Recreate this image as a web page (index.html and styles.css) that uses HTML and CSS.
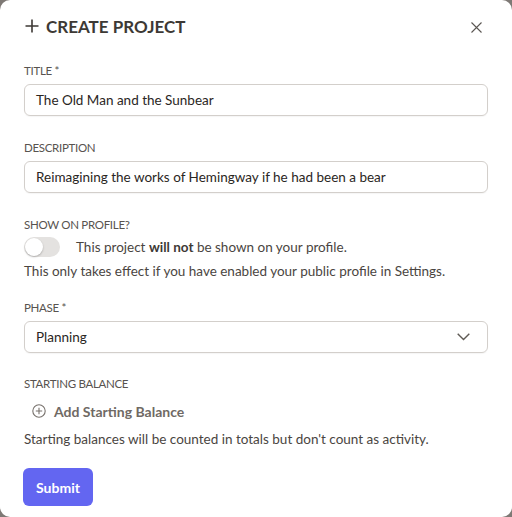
FILE: index.html
```html
<!DOCTYPE html>
<html>
<head>
<meta charset="utf-8">
<link rel="stylesheet" href="styles.css">
</head>
<body>
<div class="modal">
  <div class="header">
    <h1 class="title">
      <svg class="title-icon" width="14" height="14" viewBox="0 0 14 14"><path d="M7 0.5V13.5M0.5 7H13.5" stroke="#3d3935" stroke-width="1.6" fill="none"/></svg>
      <span>CREATE PROJECT</span>
    </h1>
    <svg class="close" width="11" height="11" viewBox="0 0 11 11"><path d="M0.5 0.5L10.5 10.5M10.5 0.5L0.5 10.5" stroke="#5a5652" stroke-width="1.1" fill="none"/></svg>
  </div>

  <div class="field f-title">
    <div class="label">TITLE *</div>
    <div class="input">The Old Man and the Sunbear</div>
  </div>

  <div class="field f-desc">
    <div class="label">DESCRIPTION</div>
    <div class="input">Reimagining the works of Hemingway if he had been a bear</div>
  </div>

  <div class="field f-profile">
    <div class="label">SHOW ON PROFILE?</div>
    <div class="toggle-row">
      <span class="toggle"><span class="knob"></span></span>
      <span class="text">This project <b>will not</b> be shown on your profile.</span>
    </div>
    <div class="text help">This only takes effect if you have enabled your public profile in Settings.</div>
  </div>

  <div class="field f-phase">
    <div class="label">PHASE *</div>
    <div class="input select">
      <span>Planning</span>
      <svg width="13" height="8" viewBox="0 0 13 8"><path d="M0.7 0.7L6.5 6.5L12.3 0.7" stroke="#5f5a55" stroke-width="1.4" fill="none"/></svg>
    </div>
  </div>

  <div class="field f-balance">
    <div class="label">STARTING BALANCE</div>
    <div class="add">
      <svg width="14" height="14" viewBox="0 0 14 14"><circle cx="7" cy="7" r="6.2" stroke="#77716c" stroke-width="1.1" fill="none"/><path d="M7 3.8V10.2M3.8 7H10.2" stroke="#77716c" stroke-width="1.1"/></svg>
      <span>Add Starting Balance</span>
    </div>
    <div class="text help2">Starting balances will be counted in totals but don't count as activity.</div>
  </div>

  <button class="submit">Submit</button>
</div>
</body>
</html>
```
FILE: styles.css
```css
html, body {
  margin: 0;
  padding: 0;
  background: #7e7975;
}
.modal {
  box-sizing: border-box;
  width: 512px;
  height: 517px;
  background: #fff;
  border-radius: 10px;
  padding: 13px 24px 0 24px;
  font-family: "Lato", "Noto Sans", sans-serif;
  color: #3d3935;
}
.header {
  display: flex;
  align-items: center;
  justify-content: space-between;
  height: 26px;
}
.title {
  margin: 0;
  display: flex;
  align-items: center;
  gap: 7px;
  font-size: 17px;
  font-weight: 700;
  letter-spacing: 0;
  color: #3d3935;
}
.title-icon { margin-left: 1px; }
.close { margin-right: 6px; margin-top: 2px; }
.label {
  font-size: 11.5px;
  line-height: 16px;
  color: #58534f;
  letter-spacing: -0.3px;
}
.input {
  box-sizing: border-box;
  height: 32px;
  margin-top: 5px;
  border: 1px solid #d3cfcb;
  border-radius: 6px;
  padding: 0 11px;
  display: flex;
  align-items: center;
  font-size: 13.5px;
  color: #2a2623;
  box-shadow: 0 1px 1px rgba(0,0,0,0.04);
}
.select {
  justify-content: space-between;
  padding-right: 17px;
}
.f-title { margin-top: 24px; }
.f-desc { margin-top: 24px; }
.f-profile { margin-top: 24px; }
.f-phase { margin-top: 19px; }
.f-balance { margin-top: 23px; }
.text {
  font-size: 13.5px;
  line-height: 20px;
  color: #4a4541;
}
.text b { font-weight: 700; color: #3d3935; }
.toggle-row {
  display: flex;
  align-items: center;
  gap: 16px;
  margin-top: 4px;
  height: 20px;
}
.toggle {
  position: relative;
  width: 36px;
  height: 20px;
  border-radius: 10px;
  background: #e4e2e0;
  flex: none;
}
.knob {
  position: absolute;
  left: 1px;
  top: 1px;
  width: 18px;
  height: 18px;
  border-radius: 50%;
  background: #fff;
  box-shadow: 0 1px 2px rgba(0,0,0,0.25);
}
.help { margin-top: 4px; }
.add {
  display: flex;
  align-items: center;
  gap: 8px;
  margin-top: 9px;
  margin-left: 8px;
  height: 20px;
  font-size: 14px;
  font-weight: 700;
  color: #6f6964;
}
.help2 { margin-top: 8px; }
.submit {
  margin-top: 19px;
  margin-left: -1px;
  width: 70px;
  height: 38px;
  border: none;
  border-radius: 6px;
  background: #6366f1;
  color: #fff;
  font-family: "Lato", "Noto Sans", sans-serif;
  font-weight: 700;
  font-size: 14px;
  padding: 0;
}
```
